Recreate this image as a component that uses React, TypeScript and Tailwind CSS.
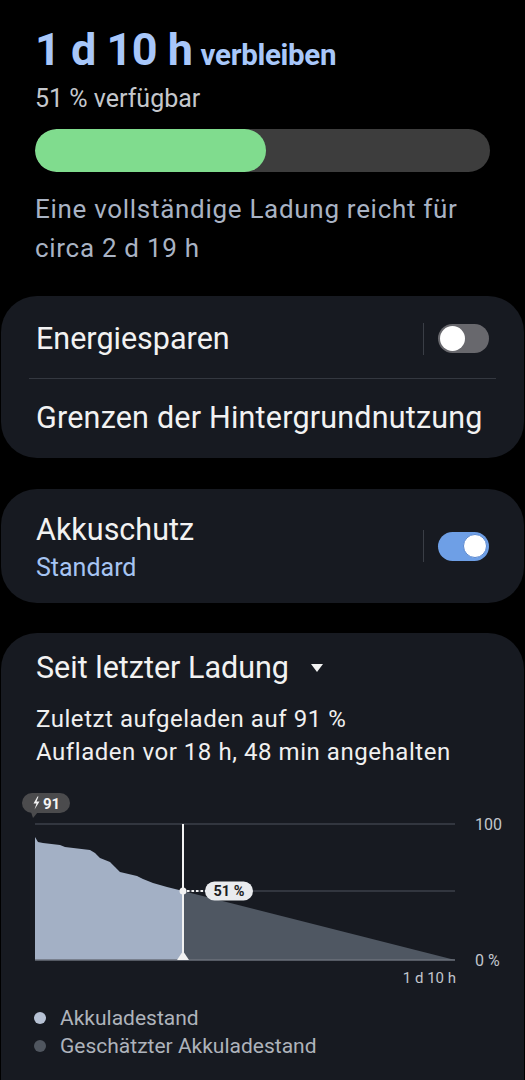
import React from "react";

const font = { fontFamily: "Roboto, 'Noto Sans', sans-serif" };

function Toggle({ on }: { on: boolean }) {
  return (
    <div className="flex items-center gap-[14px]">
      <div className="w-px h-[32px] bg-[#3a3e46]" />
      <div
        className={
          on
            ? "w-[51px] h-[29px] rounded-full bg-[#6e9fe6] flex items-center justify-end pr-[2px]"
            : "w-[51px] h-[29px] rounded-full bg-[#68686d] flex items-center justify-start pl-[2px]"
        }
      >
        <div
          className={
            on
              ? "w-[24px] h-[24px] rounded-full bg-white border border-[#5a88d0]"
              : "w-[25px] h-[25px] rounded-full bg-white"
          }
        />
      </div>
    </div>
  );
}

function Chart() {
  const pts: [number, number][] = [
    [35, 52],
    [38, 57],
    [43, 58],
    [60, 60],
    [65, 62],
    [90, 65],
    [95, 68],
    [100, 73],
    [110, 77],
    [115, 82],
    [120, 87],
    [137, 91],
    [143, 94],
    [153, 98],
    [167, 102],
    [183, 106],
  ];
  const d =
    "M35 175 " + pts.map((p) => `L${p[0]} ${p[1]}`).join(" ") + " L183 175 Z";
  return (
    <svg width="525" height="205" viewBox="0 0 525 205" className="block">
      <line x1="35" y1="39" x2="455" y2="39" stroke="#3c414a" strokeWidth="1.5" />
      <line x1="35" y1="106" x2="455" y2="106" stroke="#3c414a" strokeWidth="1.5" />
      <path d={d} fill="#a3b0c5" />
      <path d="M183 106 L455 175 L183 175 Z" fill="#4f5762" />
      <line x1="35" y1="175" x2="455" y2="175" stroke="#6b717b" strokeWidth="1.5" />
      <line x1="183" y1="39" x2="183" y2="175" stroke="#f2f2f2" strokeWidth="2" />
      <path d="M177 175 L183 166 L189 175 Z" fill="#f2f2f2" />
      <circle cx="183" cy="106" r="3.5" fill="#f2f2f2" />
      <line x1="187" y1="106" x2="206" y2="106" stroke="#f2f2f2" strokeWidth="2" strokeDasharray="2.5 2" />
      <rect x="205" y="96.5" width="48" height="19" rx="9.5" fill="#e9ebee" />
      <text x="229" y="111" textAnchor="middle" fontSize="14.5" fontWeight="700" fill="#1b1d22" style={font}>
        51 %
      </text>
      <rect x="22" y="8" width="48" height="20" rx="10" fill="#4b4b4d" />
      <path d="M31 27 L33 33 L38 27 Z" fill="#4b4b4d" />
      <path d="M37.5 11.5 L33.5 18.5 L36.5 18.5 L34.5 24.5 L39.5 16.5 L36.5 16.5 L38.5 11.5 Z" fill="#f5f5f5" />
      <text x="43" y="23.5" fontSize="15" fontWeight="700" fill="#f5f5f5" style={font}>
        91
      </text>
      <text x="475" y="45" fontSize="16" fill="#c2c6cd" style={font}>
        100
      </text>
      <text x="475" y="181" fontSize="16" fill="#c2c6cd" style={font}>
        0 %
      </text>
      <text x="456" y="198" textAnchor="end" fontSize="15" fill="#c2c6cd" style={font}>
        1 d 10 h
      </text>
    </svg>
  );
}

export default function App() {
  return (
    <div className="w-[525px] h-[1080px] bg-black overflow-hidden" style={font}>
      <div className="px-[35px] pt-[24px]">
        <div className="flex items-baseline gap-[8px] text-[#a8c7fa] font-bold">
          <span className="text-[45px] leading-[52px] tracking-[-0.5px]">1 d 10 h</span>
          <span className="text-[29.5px] leading-[52px] tracking-[-0.3px]">verbleiben</span>
        </div>
        <div className="text-[25px] leading-[30px] text-[#c4c7cc] mt-[3px]">51 % verfügbar</div>
        <div className="mt-[15px] h-[43px] rounded-full bg-[#3d3d3d] overflow-hidden">
          <div className="h-full w-[231px] rounded-full bg-[#80dc8e]" />
        </div>
        <div className="mt-[18px] text-[26px] leading-[39px] tracking-[0.7px] text-[#a9b3c4]">
          Eine vollständige Ladung reicht für
          <br />
          circa 2 d 19 h
        </div>
      </div>

      <div className="mt-[28px] mx-[1px] rounded-[36px] bg-[#171a21]">
        <div className="h-[82px] flex items-center justify-between pl-[35px] pr-[35px] pt-[3px]">
          <span className="text-[30.5px] text-[#f2f2f2]">Energiesparen</span>
          <Toggle on={false} />
        </div>
        <div className="mx-[28px] h-px bg-[#343840]" />
        <div className="h-[79px] flex items-center pl-[35px]">
          <span className="text-[30.5px] tracking-[0.2px] text-[#f2f2f2] pb-[2px]">Grenzen der Hintergrundnutzung</span>
        </div>
      </div>

      <div className="mt-[31px] mx-[1px] h-[114px] rounded-[36px] bg-[#171a21] flex items-center justify-between pl-[35px] pr-[35px]">
        <div className="flex flex-col pt-[6px]">
          <span className="text-[30.5px] leading-[38px] text-[#f2f2f2]">Akkuschutz</span>
          <span className="text-[25px] leading-[38px] text-[#a6c4f2]">Standard</span>
        </div>
        <Toggle on={true} />
      </div>

      <div className="mt-[30px] mx-[1px] h-[500px] rounded-t-[36px] bg-[#171a21]">
        <div className="pt-[17px] pl-[35px] flex items-center">
          <span className="text-[30.5px] leading-[36px] text-[#f2f2f2]">Seit letzter Ladung</span>
          <svg width="14" height="10" viewBox="0 0 14 10" className="ml-[21px]">
            <path d="M1 1 L13 1 L7 9 Z" fill="#f2f2f2" />
          </svg>
        </div>
        <div className="pl-[35px] mt-[17px] text-[24px] leading-[33px] tracking-[0.55px] text-[#f0f0f0]">
          Zuletzt aufgeladen auf 91 %
          <br />
          Aufladen vor 18 h, 48 min angehalten
        </div>
        <div className="mt-[16px] -ml-[1px]">
          <Chart />
        </div>
        <div className="mt-[14px] pl-[33px] flex flex-col text-[21px] leading-[28px] text-[#aeb3bb]">
          <div className="flex items-center gap-[14px]">
            <div className="w-[12px] h-[12px] rounded-full bg-[#b7c2d4]" />
            <span>Akkuladestand</span>
          </div>
          <div className="flex items-center gap-[14px]">
            <div className="w-[12px] h-[12px] rounded-full bg-[#50565f]" />
            <span>Geschätzter Akkuladestand</span>
          </div>
        </div>
      </div>
    </div>
  );
}
